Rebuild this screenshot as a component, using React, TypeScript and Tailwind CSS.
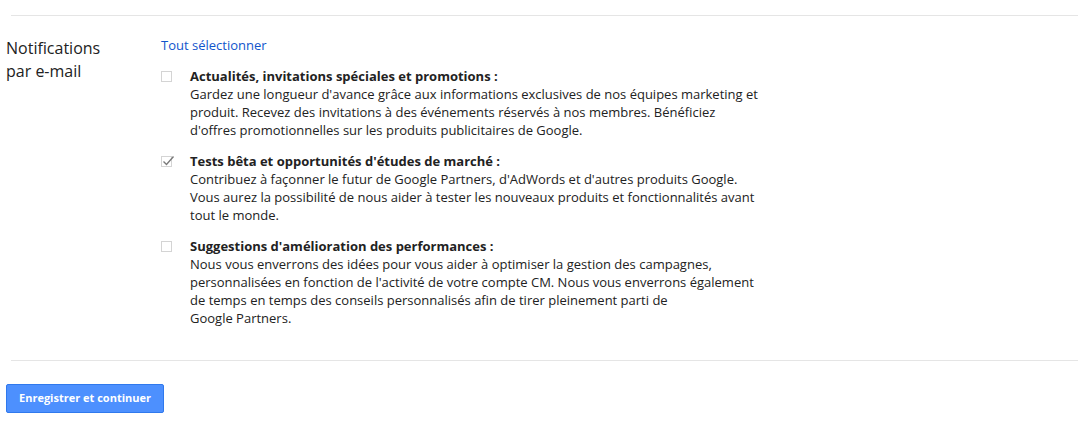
import React from "react";

const items = [
  {
    checked: false,
    title: "Actualités, invitations spéciales et promotions :",
    lines: [
      "Gardez une longueur d'avance grâce aux informations exclusives de nos équipes marketing et",
      "produit. Recevez des invitations à des événements réservés à nos membres. Bénéficiez",
      "d'offres promotionnelles sur les produits publicitaires de Google.",
    ],
  },
  {
    checked: true,
    title: "Tests bêta et opportunités d'études de marché :",
    lines: [
      "Contribuez à façonner le futur de Google Partners, d'AdWords et d'autres produits Google.",
      "Vous aurez la possibilité de nous aider à tester les nouveaux produits et fonctionnalités avant",
      "tout le monde.",
    ],
  },
  {
    checked: false,
    title: "Suggestions d'amélioration des performances :",
    lines: [
      "Nous vous enverrons des idées pour vous aider à optimiser la gestion des campagnes,",
      "personnalisées en fonction de l'activité de votre compte CM. Nous vous enverrons également",
      "de temps en temps des conseils personnalisés afin de tirer pleinement parti de",
      "Google Partners.",
    ],
  },
];

function Box({ checked }: { checked: boolean }) {
  return (
    <div className="relative mt-[4px] h-[11px] w-[11px] shrink-0 border border-[#d4d4d4] bg-white">
      {checked && (
        <svg
          className="absolute left-[-1px] top-[-3px]"
          width="15"
          height="14"
          viewBox="0 0 15 14"
        >
          <path d="M2.5 7.5 L5.5 10.5 L12.5 2.5" fill="none" stroke="#7a7a7a" strokeWidth="1.4" />
        </svg>
      )}
    </div>
  );
}

export default function App() {
  return (
    <div
      className="w-[1078px] h-[427px] bg-white text-[#222]"
      style={{ fontFamily: '"Open Sans", "Liberation Sans", sans-serif' }}
    >
      <div className="pt-[15px] pl-[11px]">
        <div className="h-px bg-[#e5e5e5]" />
      </div>
      <div className="flex pt-[20px]">
        <div className="w-[161px] shrink-0 pl-[6px] pt-[1px] text-[16px] leading-[23px] text-[#222]">
          Notifications
          <br />
          par e-mail
        </div>
        <div className="flex flex-col">
          <div className="text-[13px] leading-[18px] text-[#1155cc]">Tout sélectionner</div>
          <div className="mt-[13px] flex flex-col gap-[13px]">
            {items.map((it, i) => (
              <div key={i} className="flex">
                <Box checked={it.checked} />
                <div className="ml-[18px] text-[13px] leading-[18px] whitespace-nowrap">
                  <div className="font-bold">{it.title}</div>
                  {it.lines.map((l, j) => (
                    <div key={j}>{l}</div>
                  ))}
                </div>
              </div>
            ))}
          </div>
        </div>
      </div>
      <div className="pt-[33px] pl-[11px]">
        <div className="h-px bg-[#e5e5e5]" />
      </div>
      <div className="pt-[23px] pl-[6px]">
        <button className="h-[29px] w-[158px] rounded-[2px] border border-[#3079ed] bg-[#4d90fe] text-[11px] font-bold text-white">
          Enregistrer et continuer
        </button>
      </div>
    </div>
  );
}
